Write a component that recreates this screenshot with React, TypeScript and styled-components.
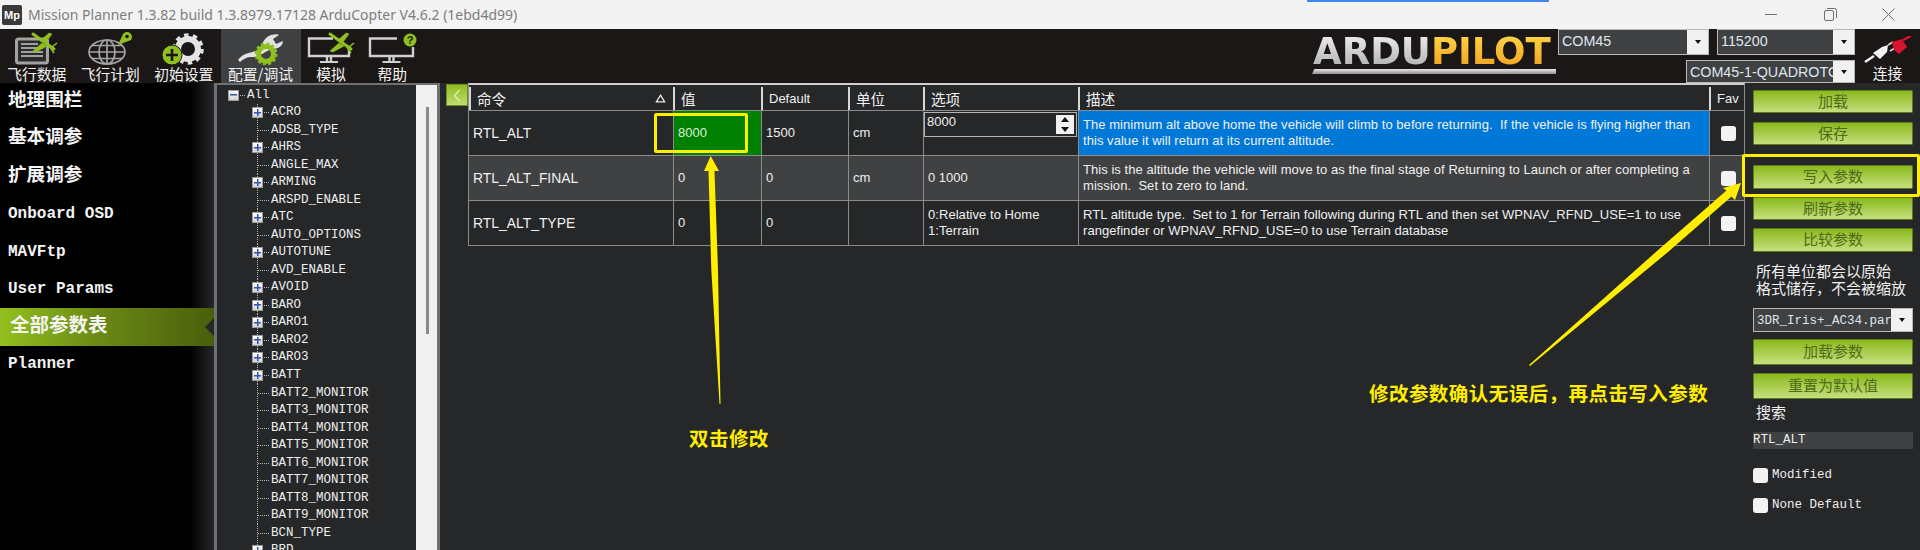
import styled, { createGlobalStyle } from 'styled-components';

const GlobalStyle = createGlobalStyle`
  html, body {
    margin: 0;
    background: #262729;
  }
  * {
    box-sizing: border-box;
  }
`;

const UI_FONT = `"Liberation Sans", "Noto Sans CJK SC", sans-serif`;
const CJK_FONT = `"Noto Sans CJK SC", sans-serif`;
const MONO_FONT = `"Liberation Mono", "Noto Sans CJK SC", monospace`;
const YELLOW = '#ffee00';

const Page = styled.div`
  position: relative;
  width: 1920px;
  height: 550px;
  overflow: hidden;
  display: flex;
  flex-direction: column;
  background: #262729;
  color: #f0f0f0;
  font-family: ${UI_FONT};
`;

/* title bar */
const TitleBar = styled.div`
  height: 29px;
  flex: none;
  display: flex;
  align-items: center;
  padding: 0 2px;
  background: #f3f3f3;
`;

const AppIcon = styled.div`
  width: 20px;
  height: 20px;
  margin-right: 6px;
  border-radius: 2px;
  background: #3a3a3a;
  color: #fff;
  font: bold 11px/20px ${UI_FONT};
  text-align: center;
`;

const TitleText = styled.div`
  flex: 1;
  color: #7d7d7d;
  font: 14px "Noto Sans", sans-serif;
`;

const WinButton = styled.div`
  width: 58.5px;
  display: flex;
  justify-content: center;
  color: #6f6f6f;
`;

const TaskHint = styled.div`
  position: absolute;
  left: 1307px;
  top: 0;
  width: 242px;
  height: 2px;
  background: #3f86f4;
`;

/* toolbar */
const Toolbar = styled.div`
  height: 54px;
  flex: none;
  display: flex;
  background: #1a1716;
`;

const MenuItem = styled.div<{ $width: number; $active?: boolean }>`
  width: ${(p) => p.$width}px;
  display: flex;
  flex-direction: column;
  align-items: center;
  background: ${(p) => (p.$active ? '#3f4042' : 'transparent')};

  svg {
    display: block;
  }
`;

const MenuLabel = styled.div`
  height: 18px;
  color: #f2f2f2;
  font: 14.8px/17px ${CJK_FONT};
  white-space: nowrap;
`;

const Logo = styled.div`
  position: relative;
  width: 244px;
  height: 38px;
  margin: 7px 2px 0 auto;
  padding-left: 1px;
  font: bold 37px/31px "DejaVu Sans", sans-serif;
  white-space: nowrap;

  &::after {
    content: '';
    position: absolute;
    left: 0;
    right: 0;
    bottom: 0;
    height: 5px;
    background: linear-gradient(#e8e8e8, #8f8f8f);
    clip-path: polygon(1% 0, 100% 0, 100% 100%, 0 100%);
  }
`;

const LogoPart = styled.span<{ $from: string; $to: string }>`
  background: linear-gradient(${(p) => p.$from}, ${(p) => p.$to});
  -webkit-background-clip: text;
  background-clip: text;
  color: transparent;
`;

const ConnectionArea = styled.div`
  width: 297px;
  flex: none;
  display: flex;
  flex-wrap: wrap;
  justify-content: space-between;
  align-content: flex-start;
  row-gap: 5px;
`;

const Combo = styled.div<{ $width: number; $height: number; $left?: number }>`
  width: ${(p) => p.$width}px;
  height: ${(p) => p.$height}px;
  margin-left: ${(p) => p.$left ?? 0}px;
  flex: none;
  display: flex;
  border: 1px solid #b9b9b9;
  background: #404142;
  overflow: hidden;
`;

const ComboText = styled.div<{ $mono?: boolean }>`
  flex: 1;
  min-width: 0;
  padding: 2px 3px;
  overflow: hidden;
  color: #dfe6ee;
  white-space: nowrap;
  font: ${(p) => (p.$mono ? `12.5px/20px ${MONO_FONT}` : `14.3px/18px ${UI_FONT}`)};
`;

const ComboArrow = styled.div`
  width: 21px;
  flex: none;
  display: flex;
  align-items: center;
  justify-content: center;
  background: #f1f1f1;

  &::after {
    content: '';
    border: 3.5px solid transparent;
    border-top: 4px solid #111;
    border-bottom: 0;
  }
`;

const ConnectButton = styled.div`
  width: 65px;
  flex: none;
  display: flex;
  flex-direction: column;
  align-items: center;
  padding-top: 7px;
`;

const ConnectLabel = styled.div`
  color: #f2f2f2;
  font: 14.8px/20px ${CJK_FONT};
`;

/* body */
const Body = styled.div`
  flex: 1;
  min-height: 0;
  display: flex;
`;

const Sidebar = styled.nav`
  width: 214px;
  flex: none;
  background: linear-gradient(to right, #000 0, #000 190px, #262729 214px);
`;

const SideItem = styled.div<{ $active?: boolean; $latin?: boolean }>`
  position: relative;
  height: 37.5px;
  padding: 0 0 ${(p) => (p.$latin ? 0 : p.$active ? 7 : 9)}px ${(p) => (p.$active ? 10 : 8)}px;
  display: flex;
  align-items: center;
  color: #f4f4f4;
  font: ${(p) => (p.$latin ? `bold 16px ${MONO_FONT}` : `bold ${p.$active ? 19.5 : 18.6}px ${CJK_FONT}`)};
  background: ${(p) => (p.$active ? 'linear-gradient(to right, #93c01f, #6b8a14 45%, #4a5f0a)' : 'transparent')};

  ${(p) =>
    p.$active &&
    `&::after {
      content: '';
      position: absolute;
      right: 0;
      top: 10px;
      border: 9px solid transparent;
      border-right-color: #262729;
      border-left: 0;
    }`}
`;

const Tree = styled.div`
  width: 226px;
  flex: none;
  display: flex;
  border: 3px solid #6f7071;
  border-width: 2px 3px 0;
  background: #262729;
  overflow: hidden;
`;

const TreeList = styled.div`
  flex: 1;
  min-width: 0;
  padding-top: 1.5px;
`;

const TreeRow = styled.div<{ $depth: number }>`
  height: 17.52px;
  display: flex;
  align-items: center;
  padding-left: ${(p) => (p.$depth === 0 ? 11 : 35)}px;
  color: #efefef;
  font: 12.5px/17px ${MONO_FONT};
  white-space: nowrap;
`;

const Gutter = styled.span<{ $root?: boolean }>`
  position: relative;
  width: 19px;
  height: 100%;
  flex: none;
  background:
    ${(p) =>
      p.$root
        ? ''
        : 'repeating-linear-gradient(to bottom, #b5b5b5 0 1px, transparent 1px 2px) 5px 0 / 1px 100% no-repeat,'}
    repeating-linear-gradient(to right, #b5b5b5 0 1px, transparent 1px 2px) 6px 50% / 12px 1px no-repeat;
`;

const Expander = styled.span<{ $open?: boolean }>`
  position: absolute;
  left: 0;
  top: 3px;
  width: 11px;
  height: 11px;
  border: 1px solid #9a9a9a;
  background:
    linear-gradient(#2f55b0, #2f55b0) center / 7px 1.5px no-repeat,
    ${(p) => (p.$open ? '' : 'linear-gradient(#2f55b0, #2f55b0) center / 1.5px 7px no-repeat,')}
    linear-gradient(#fff, #d4d4d4);
`;

const ScrollTrack = styled.div`
  position: relative;
  width: 21px;
  flex: none;
  background: #f0f0f0;

  &::after {
    content: '';
    position: absolute;
    left: 10px;
    top: 22px;
    width: 3px;
    height: 227px;
    background: #8a8a8a;
  }
`;

const Main = styled.main`
  width: 1305px;
  flex: none;
  display: flex;
  align-items: flex-start;
  padding-left: 6px;
`;

const CollapseButton = styled.div`
  width: 22px;
  height: 22px;
  margin-top: 1px;
  display: flex;
  align-items: center;
  justify-content: center;
  border: 1px solid #6f8f20;
  background: linear-gradient(#8fbc1e, #c0dc70);
  color: #e6f2c0;

  svg {
    display: block;
  }
`;

const ParamTable = styled.div`
  width: 1277px;
  display: flex;
  flex-direction: column;
  border-top: 2px solid #cfcfcf;
  border-left: 1px solid #8c8c8c;
  border-right: 1px solid #8c8c8c;
`;

const TableRow = styled.div<{ $height: number; $alt?: boolean }>`
  height: ${(p) => p.$height}px;
  display: grid;
  grid-template-columns: 204px 88px 87px 75px 155px 631px 1fr;
  background: ${(p) => (p.$alt ? '#404142' : '#262729')};
  border-bottom: 1px solid #8c8c8c;
`;

const HeadCell = styled.div<{ $latin?: boolean }>`
  display: flex;
  align-items: center;
  justify-content: space-between;
  padding: 0 7px 0 6px;
  border-left: 2px solid #d8d8d8;
  margin: 2px 0 0;
  font: ${(p) => (p.$latin ? `13px ${UI_FONT}` : `14.6px ${CJK_FONT}`)};
`;

const Cell = styled.div<{ $name?: boolean; $changed?: boolean; $selected?: boolean }>`
  min-width: 0;
  display: flex;
  align-items: center;
  padding: 0 4px;
  border-left: 1px solid #8c8c8c;
  color: ${(p) => (p.$changed ? '#d9f2d9' : '#f0f0f0')};
  font: ${(p) => (p.$name ? 13.9 : 13)}px/16.5px ${UI_FONT};
  background: ${(p) => (p.$changed ? '#008000' : p.$selected ? '#0078d7' : 'transparent')};

  &:first-child {
    border-left: 0;
  }
`;

const DescText = styled.div`
  white-space: pre-wrap;
  letter-spacing: 0.05px;
`;

const OptionCell = styled(Cell)`
  align-items: flex-start;
  padding: 1px 1px 0 0;
`;

const SpinBox = styled.div`
  width: 100%;
  height: 25px;
  display: flex;
  justify-content: space-between;
  padding: 2px;
  border: 1px solid #b3b3b3;
  line-height: 14px;
`;

const SpinButtons = styled.div`
  width: 18px;
  display: flex;
  flex-direction: column;
  gap: 1px;
  background: #f1f1f1;
`;

const SpinArrow = styled.span<{ $up?: boolean }>`
  flex: 1;
  display: flex;
  align-items: center;
  justify-content: center;

  &::after {
    content: '';
    border: 4px solid transparent;
    ${(p) => (p.$up ? 'border-bottom: 5px solid #111; border-top: 0;' : 'border-top: 5px solid #111; border-bottom: 0;')}
  }
`;

const FavCell = styled(Cell)`
  justify-content: center;
  padding: 0 0 0 3px;
`;

const CheckBox = styled.span`
  display: block;
  width: 15px;
  height: 15px;
  flex: none;
  border-radius: 3px;
  background: #f3f3f3;
`;

/* right panel */
const SidePanel = styled.aside`
  flex: 1;
  min-width: 0;
  display: flex;
  flex-direction: column;
  padding: 7px 7px 0 8px;
`;

const ActionButton = styled.div<{ $height: number; $top: number }>`
  height: ${(p) => p.$height}px;
  margin-top: ${(p) => p.$top}px;
  padding-bottom: 3px;
  flex: none;
  display: flex;
  align-items: center;
  justify-content: center;
  border: 1px solid #5d7a1c;
  border-radius: 1px;
  background: linear-gradient(#8ab91c, #c6df7e);
  color: #4f6b17;
  font: 15px/1 ${CJK_FONT};
`;

const NoteText = styled.div`
  margin: 10px 0 12px 3px;
  color: #f0f0f0;
  font: 15px/17px ${CJK_FONT};
  white-space: nowrap;
`;

const SearchLabel = styled.div`
  margin: 5px 0 12px 3px;
  font: 15px/16px ${CJK_FONT};
`;

const SearchInput = styled.div`
  height: 17px;
  flex: none;
  background: #404142;
  color: #f0f0f0;
  font: 12.5px/17px ${MONO_FONT};
`;

const CheckRow = styled.label<{ $top: number }>`
  margin-top: ${(p) => p.$top}px;
  display: flex;
  align-items: center;
  gap: 4px;
  font: 12.5px/15px ${MONO_FONT};
  color: #efefef;
`;

/* annotations over the window */
const Overlay = styled.svg`
  position: absolute;
  left: 0;
  top: 0;
  pointer-events: none;
`;

const HighlightBox = styled.div<{ $x: number; $y: number; $w: number; $h: number }>`
  position: absolute;
  left: ${(p) => p.$x}px;
  top: ${(p) => p.$y}px;
  width: ${(p) => p.$w}px;
  height: ${(p) => p.$h}px;
  border: 3px solid ${YELLOW};
  border-radius: 2px;
`;

const Callout = styled.div<{ $x: number; $y: number }>`
  position: absolute;
  left: ${(p) => p.$x}px;
  top: ${(p) => p.$y}px;
  color: ${YELLOW};
  font: bold 19.5px/24px ${CJK_FONT};
  letter-spacing: 0.45px;
  white-space: nowrap;
`;

const GREEN = '#8fc01f';
const GREY = '#a3a3a3';

function Plane({ x, y }: { x: number; y: number }) {
  return (
    <g transform={`translate(${x} ${y})`} fill={GREEN} stroke={GREEN}>
      <path d="M0 0 L21 15" strokeWidth="3" strokeLinecap="round" />
      <path d="M7 7 L13 8 L19 0 L16 -1 Z M9 9 L0 17 L3 18 L14 12 Z" strokeWidth="0.6" />
      <path d="M19 13 L24 9 M17 13 L21 19" strokeWidth="1.6" />
    </g>
  );
}

function Monitor({ x, right }: { x: number; right: number }) {
  return (
    <g fill="none" stroke="#d0d0d0" strokeWidth="2.4">
      <path d={`M${x + right - 17} 9.5 H${x + 1} V27 H${x + right - 1} V18`} />
      <path d={`M${x + right / 2 - 2} 28 V32 M${x + right / 2 + 2} 28 V32`} />
      <path d={`M${x + right / 2 - 9} 33 H${x + right / 2 + 9}`} strokeWidth="2" />
    </g>
  );
}

function FlightDataIcon() {
  return (
    <svg width="73.5" height="36" viewBox="0 0 73.5 36">
      <rect x="16.5" y="10" width="31" height="24" rx="2" fill="#2b2b2b" stroke={GREY} strokeWidth="3" />
      <path d="M21 15 H38 M21 19 H43 M21 23 H43 M21 27 H43" stroke="#c8c8c8" strokeWidth="1.6" />
      <Plane x={33} y={5} />
    </svg>
  );
}

function FlightPlanIcon() {
  return (
    <svg width="73.5" height="36" viewBox="0 0 73.5 36">
      <g fill="none" stroke={GREY} strokeWidth="1.7">
        <ellipse cx="33" cy="23" rx="18" ry="12" />
        <ellipse cx="33" cy="23" rx="8" ry="12" />
        <path d="M33 11 V35 M15 23 H51 M18 16.5 H48 M18 29.5 H48" />
      </g>
      <path d="M44 16 L49 5 A5 5 0 1 1 57 11 Z" fill={GREEN} />
      <circle cx="53" cy="7.5" r="1.8" fill="#1a1716" />
    </svg>
  );
}

function SetupIcon() {
  return (
    <svg width="73.5" height="36" viewBox="0 0 73.5 36">
      <circle cx="41" cy="20" r="10" fill="none" stroke="#e4e4e4" strokeWidth="6" />
      <circle cx="41" cy="20" r="14" fill="none" stroke="#e4e4e4" strokeWidth="3.5" strokeDasharray="4.5 4.3" />
      <circle cx="25" cy="26" r="10" fill={GREEN} stroke="#1a1716" strokeWidth="1" />
      <path d="M19 26 H31 M25 20 V32" stroke="#1a1716" strokeWidth="2.6" />
    </svg>
  );
}

function TuneIcon() {
  return (
    <svg width="80" height="36" viewBox="0 0 80 36">
      <path
        d="M17 31 C24 22 32 25 38 20 C42 15 42 9 50 6 C54 5 57 5 58 6 L52 10 L55 15 L62 12 C62 17 57 20 51 20 C44 22 38 29 30 28 C26 28 22 30 19 33 Z"
        fill="#e2e2e2"
      />
      <circle cx="45" cy="25" r="7.5" fill="none" stroke={GREEN} strokeWidth="5" />
      <circle cx="45" cy="25" r="10.5" fill="none" stroke={GREEN} strokeWidth="2" strokeDasharray="3 2.5" />
    </svg>
  );
}

function SimIcon() {
  return (
    <svg width="61" height="36" viewBox="0 0 61 36">
      <Monitor x={7} right={42} />
      <Plane x={29} y={5} />
    </svg>
  );
}

function HelpIcon() {
  return (
    <svg width="61.5" height="36" viewBox="0 0 61.5 36">
      <Monitor x={7} right={45} />
      <circle cx="48" cy="11" r="6.5" fill={GREEN} />
      <text x="48" y="15" textAnchor="middle" fontSize="11" fontWeight="bold" fontFamily="Liberation Sans" fill="#1a1716">
        ?
      </text>
    </svg>
  );
}

function PlugIcon() {
  return (
    <svg width="48" height="27" viewBox="0 0 48 27">
      <path d="M1 26 L10 20" stroke="#f2f2f2" strokeWidth="2.4" />
      <path d="M9 17 L18 11 L24 9 L23 16 L16 23 Z" fill="#f2f2f2" />
      <path d="M24 9 L29 6 M26 15 L31 12" stroke="#dcdcdc" strokeWidth="1.5" />
      <path d="M28 6 L38 3 L43 11 L35 18 L30 14 Z" fill="#d8142e" />
      <path d="M39 4 L47 0" stroke="#d8142e" strokeWidth="2.4" />
    </svg>
  );
}

const menuItems = [
  { label: '飞行数据', width: 73.5, icon: <FlightDataIcon /> },
  { label: '飞行计划', width: 73.5, icon: <FlightPlanIcon /> },
  { label: '初始设置', width: 73.5, icon: <SetupIcon /> },
  { label: '配置/调试', width: 80, icon: <TuneIcon />, active: true },
  { label: '模拟', width: 61, icon: <SimIcon /> },
  { label: '帮助', width: 61.5, icon: <HelpIcon /> },
];

const sideItems = [
  { label: '地理围栏' },
  { label: '基本调参' },
  { label: '扩展调参' },
  { label: 'Onboard OSD', latin: true },
  { label: 'MAVFtp', latin: true },
  { label: 'User Params', latin: true },
  { label: '全部参数表', active: true },
  { label: 'Planner', latin: true },
];

// names with a plus box are collapsed groups
const treeItems: [string, boolean][] = [
  ['ACRO', true],
  ['ADSB_TYPE', false],
  ['AHRS', true],
  ['ANGLE_MAX', false],
  ['ARMING', true],
  ['ARSPD_ENABLE', false],
  ['ATC', true],
  ['AUTO_OPTIONS', false],
  ['AUTOTUNE', true],
  ['AVD_ENABLE', false],
  ['AVOID', true],
  ['BARO', true],
  ['BARO1', true],
  ['BARO2', true],
  ['BARO3', true],
  ['BATT', true],
  ['BATT2_MONITOR', false],
  ['BATT3_MONITOR', false],
  ['BATT4_MONITOR', false],
  ['BATT5_MONITOR', false],
  ['BATT6_MONITOR', false],
  ['BATT7_MONITOR', false],
  ['BATT8_MONITOR', false],
  ['BATT9_MONITOR', false],
  ['BCN_TYPE', false],
  ['BRD', true],
];

const headers = [
  { label: '值' },
  { label: 'Default', latin: true },
  { label: '单位' },
  { label: '选项' },
  { label: '描述' },
  { label: 'Fav', latin: true },
];

export default function App() {
  return (
    <Page>
      <GlobalStyle />
      <TitleBar>
        <AppIcon>Mp</AppIcon>
        <TitleText>Mission Planner 1.3.82 build 1.3.8979.17128 ArduCopter V4.6.2 (1ebd4d99)</TitleText>
        <WinButton>
          <svg width="13" height="13" viewBox="0 0 13 13">
            <path d="M0 6.5 H12" stroke="currentColor" />
          </svg>
        </WinButton>
        <WinButton>
          <svg width="13" height="13" viewBox="0 0 13 13" fill="none" stroke="currentColor">
            <rect x="0.5" y="2.5" width="9" height="10" rx="1.5" />
            <path d="M3 0.5 H10.5 Q12.5 0.5 12.5 2.5 V10" />
          </svg>
        </WinButton>
        <WinButton>
          <svg width="13" height="13" viewBox="0 0 13 13">
            <path d="M0.5 0.5 L12.5 12.5 M12.5 0.5 L0.5 12.5" stroke="currentColor" />
          </svg>
        </WinButton>
      </TitleBar>
      <TaskHint />

      <Toolbar>
        {menuItems.map((item) => (
          <MenuItem key={item.label} $width={item.width} $active={item.active}>
            {item.icon}
            <MenuLabel>{item.label}</MenuLabel>
          </MenuItem>
        ))}
        <Logo>
          <LogoPart $from="#f4f4f4" $to="#a8a8a8">ARDU</LogoPart>
          <LogoPart $from="#ffdc4a" $to="#f09a1c">PILOT</LogoPart>
        </Logo>
        <ConnectionArea>
          <Combo $width={151} $height={26}>
            <ComboText>COM45</ComboText>
            <ComboArrow />
          </Combo>
          <Combo $width={138} $height={26}>
            <ComboText>115200</ComboText>
            <ComboArrow />
          </Combo>
          <Combo $width={169} $height={23} $left={128}>
            <ComboText>COM45-1-QUADROTOR</ComboText>
            <ComboArrow />
          </Combo>
        </ConnectionArea>
        <ConnectButton>
          <PlugIcon />
          <ConnectLabel>连接</ConnectLabel>
        </ConnectButton>
      </Toolbar>

      <Body>
        <Sidebar>
          {sideItems.map((item) => (
            <SideItem key={item.label} $active={item.active} $latin={item.latin}>
              {item.label}
            </SideItem>
          ))}
        </Sidebar>

        <Tree>
          <TreeList>
            <TreeRow $depth={0}>
              <Gutter $root>
                <Expander $open />
              </Gutter>
              All
            </TreeRow>
            {treeItems.map(([name, group]) => (
              <TreeRow key={name} $depth={1}>
                <Gutter>{group && <Expander />}</Gutter>
                {name}
              </TreeRow>
            ))}
          </TreeList>
          <ScrollTrack />
        </Tree>

        <Main>
          <CollapseButton>
            <svg width="8" height="13" viewBox="0 0 8 13" fill="none" stroke="currentColor" strokeWidth="1.2">
              <path d="M6.5 1 L1.5 6.5 L6.5 12" />
            </svg>
          </CollapseButton>
          <ParamTable>
            <TableRow $height={26}>
              <HeadCell>
                命令
                <svg width="11" height="9" viewBox="0 0 11 9" fill="none" stroke="#e8e8e8" strokeWidth="1.3">
                  <path d="M5.5 1.2 L9.6 7.8 H1.4 Z" />
                </svg>
              </HeadCell>
              {headers.map((h) => (
                <HeadCell key={h.label} $latin={h.latin}>
                  {h.label}
                </HeadCell>
              ))}
            </TableRow>

            <TableRow $height={45}>
              <Cell $name>RTL_ALT</Cell>
              <Cell $changed>8000</Cell>
              <Cell>1500</Cell>
              <Cell>cm</Cell>
              <OptionCell>
                <SpinBox>
                  8000
                  <SpinButtons>
                    <SpinArrow $up />
                    <SpinArrow />
                  </SpinButtons>
                </SpinBox>
              </OptionCell>
              <Cell $selected>
                <DescText>
                  {'The minimum alt above home the vehicle will climb to before returning.  If the vehicle is flying higher than this value it will return at its current altitude.'}
                </DescText>
              </Cell>
              <FavCell>
                <CheckBox />
              </FavCell>
            </TableRow>

            <TableRow $height={45} $alt>
              <Cell $name>RTL_ALT_FINAL</Cell>
              <Cell>0</Cell>
              <Cell>0</Cell>
              <Cell>cm</Cell>
              <Cell>0 1000</Cell>
              <Cell>
                <DescText>
                  {'This is the altitude the vehicle will move to as the final stage of Returning to Launch or after completing a mission.  Set to zero to land.'}
                </DescText>
              </Cell>
              <FavCell>
                <CheckBox />
              </FavCell>
            </TableRow>

            <TableRow $height={45}>
              <Cell $name>RTL_ALT_TYPE</Cell>
              <Cell>0</Cell>
              <Cell>0</Cell>
              <Cell />
              <Cell>
                <DescText>{'0:Relative to Home\n1:Terrain'}</DescText>
              </Cell>
              <Cell>
                <DescText>
                  {'RTL altitude type.  Set to 1 for Terrain following during RTL and then set WPNAV_RFND_USE=1 to use rangefinder or WPNAV_RFND_USE=0 to use Terrain database'}
                </DescText>
              </Cell>
              <FavCell>
                <CheckBox />
              </FavCell>
            </TableRow>
          </ParamTable>
        </Main>

        <SidePanel>
          <ActionButton $height={23} $top={0}>加载</ActionButton>
          <ActionButton $height={23} $top={9}>保存</ActionButton>
          <ActionButton $height={24} $top={20}>写入参数</ActionButton>
          <ActionButton $height={23} $top={8}>刷新参数</ActionButton>
          <ActionButton $height={24} $top={8}>比较参数</ActionButton>
          <NoteText>
            所有单位都会以原始
            <br />
            格式储存，不会被缩放
          </NoteText>
          <Combo $width={160} $height={24}>
            <ComboText $mono>3DR_Iris+_AC34.param</ComboText>
            <ComboArrow />
          </Combo>
          <ActionButton $height={26} $top={7}>加载参数</ActionButton>
          <ActionButton $height={26} $top={8}>重置为默认值</ActionButton>
          <SearchLabel>搜索</SearchLabel>
          <SearchInput>RTL_ALT</SearchInput>
          <CheckRow $top={19}>
            <CheckBox />
            Modified
          </CheckRow>
          <CheckRow $top={15}>
            <CheckBox />
            None Default
          </CheckRow>
        </SidePanel>
      </Body>

      <Overlay width="1920" height="550" viewBox="0 0 1920 550">
        <path
          d="M710.7 156 L719 171 L714.5 171 L718 270 L720.5 404 L719.5 404 L711.3 270 L708.5 171 L704 171 Z"
          fill={YELLOW}
        />
        <path
          d="M1529 365 L1657 251 L1726.5 190.5 L1723 188 L1741 183 L1735 200 L1731.5 196.5 L1668 252 L1530 366 Z"
          fill={YELLOW}
        />
      </Overlay>
      <HighlightBox $x={654} $y={113} $w={94} $h={40} />
      <HighlightBox $x={1742} $y={154} $w={178} $h={43} />
      <Callout $x={689} $y={426}>双击修改</Callout>
      <Callout $x={1369} $y={381}>修改参数确认无误后，再点击写入参数</Callout>
    </Page>
  );
}
